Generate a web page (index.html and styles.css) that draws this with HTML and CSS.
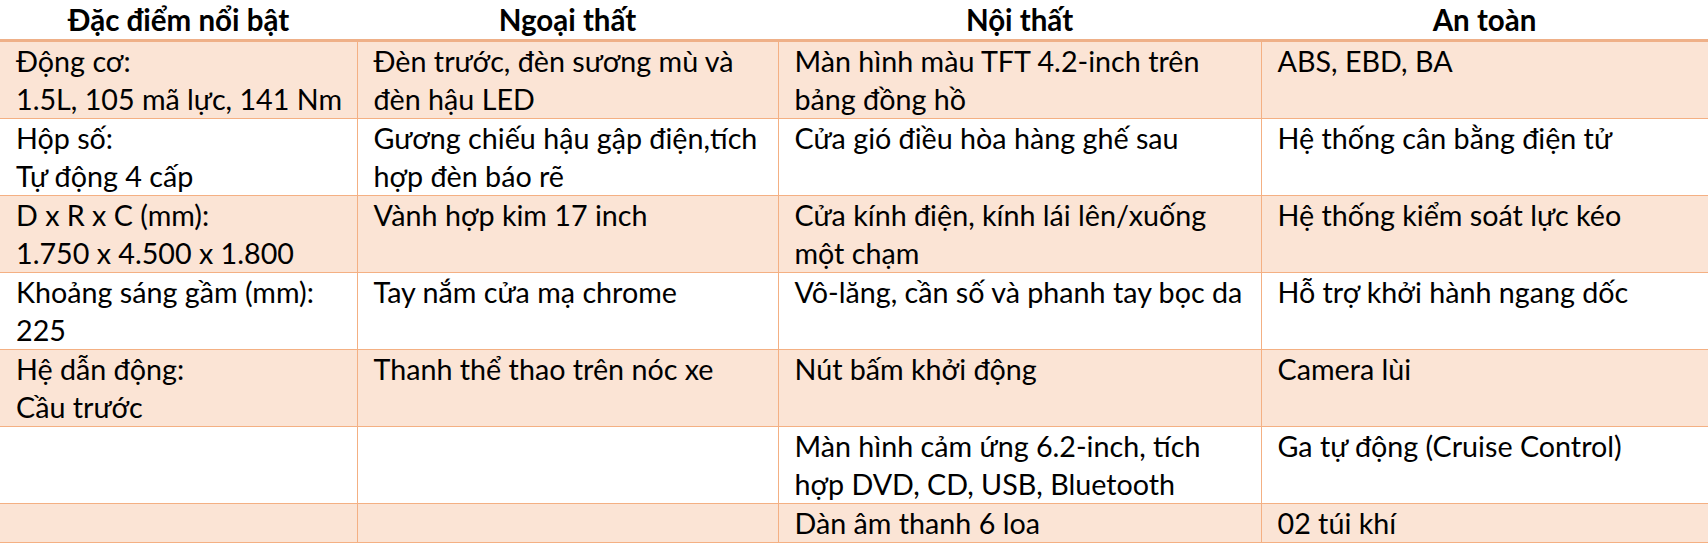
FILE: index.html
```html
<!DOCTYPE html>
<html lang="vi">
<head>
<meta charset="utf-8">
<title>Thông số xe</title>
<link rel="stylesheet" href="styles.css">
</head>
<body>
<table class="spec">
  <colgroup>
    <col class="c1"><col class="c2"><col class="c3"><col class="c4">
  </colgroup>
  <thead>
    <tr>
      <th>Đặc điểm nổi bật</th>
      <th>Ngoại thất</th>
      <th>Nội thất</th>
      <th>An toàn</th>
    </tr>
  </thead>
  <tbody>
    <tr class="odd">
      <td>Động cơ:<br>1.5L, 105 mã lực, 141 Nm</td>
      <td>Đèn trước, đèn sương mù và<br>đèn hậu LED</td>
      <td>Màn hình màu TFT 4.2-inch trên<br>bảng đồng hồ</td>
      <td>ABS, EBD, BA</td>
    </tr>
    <tr>
      <td>Hộp số:<br>Tự động 4 cấp</td>
      <td>Gương chiếu hậu gập điện,tích<br>hợp đèn báo rẽ</td>
      <td>Cửa gió điều hòa hàng ghế sau</td>
      <td>Hệ thống cân bằng điện tử</td>
    </tr>
    <tr class="odd">
      <td>D x R x C (mm):<br>1.750 x 4.500 x 1.800</td>
      <td>Vành hợp kim 17 inch</td>
      <td>Cửa kính điện, kính lái lên/xuống<br>một chạm</td>
      <td>Hệ thống kiểm soát lực kéo</td>
    </tr>
    <tr>
      <td>Khoảng sáng gầm (mm):<br>225</td>
      <td>Tay nắm cửa mạ chrome</td>
      <td>Vô-lăng, cần số và phanh tay bọc da</td>
      <td>Hỗ trợ khởi hành ngang dốc</td>
    </tr>
    <tr class="odd">
      <td>Hệ dẫn động:<br>Cầu trước</td>
      <td>Thanh thể thao trên nóc xe</td>
      <td>Nút bấm khởi động</td>
      <td>Camera lùi</td>
    </tr>
    <tr>
      <td></td>
      <td></td>
      <td>Màn hình cảm ứng 6.2-inch, tích<br>hợp DVD, CD, USB, Bluetooth</td>
      <td>Ga tự động (Cruise Control)</td>
    </tr>
    <tr class="odd short">
      <td></td>
      <td></td>
      <td>Dàn âm thanh 6 loa</td>
      <td>02 túi khí</td>
    </tr>
  </tbody>
</table>
</body>
</html>
```

FILE: styles.css
```css
html, body {
  margin: 0;
  padding: 0;
  background: #ffffff;
}

.spec {
  width: 1708px;
  table-layout: fixed;
  border-collapse: collapse;
  font-family: Lato, "Open Sans", "Liberation Sans", sans-serif;
  font-size: 28.7px;
  line-height: 38px;
  color: #000000;
}

.c1 { width: 357px; }
.c2 { width: 421px; }
.c3 { width: 483px; }
.c4 { width: 447px; }

.spec th {
  font-size: 29.5px;
  font-weight: 700;
  text-align: center;
  height: 39px;
  padding: 0;
  vertical-align: middle;
  border-bottom: 3px solid #efb088;
}

.spec td {
  height: 76px;
  padding: 0 8px 0 16px;
  vertical-align: top;
  text-align: left;
  border-left: 1px solid #f4b083;
  border-bottom: 1px solid #f4b083;
  white-space: nowrap;
}

.spec td:first-child {
  border-left: none;
}

.spec tr.odd td {
  background: #fbe4d5;
}

.spec tr.short td {
  height: 38px;
}
```
